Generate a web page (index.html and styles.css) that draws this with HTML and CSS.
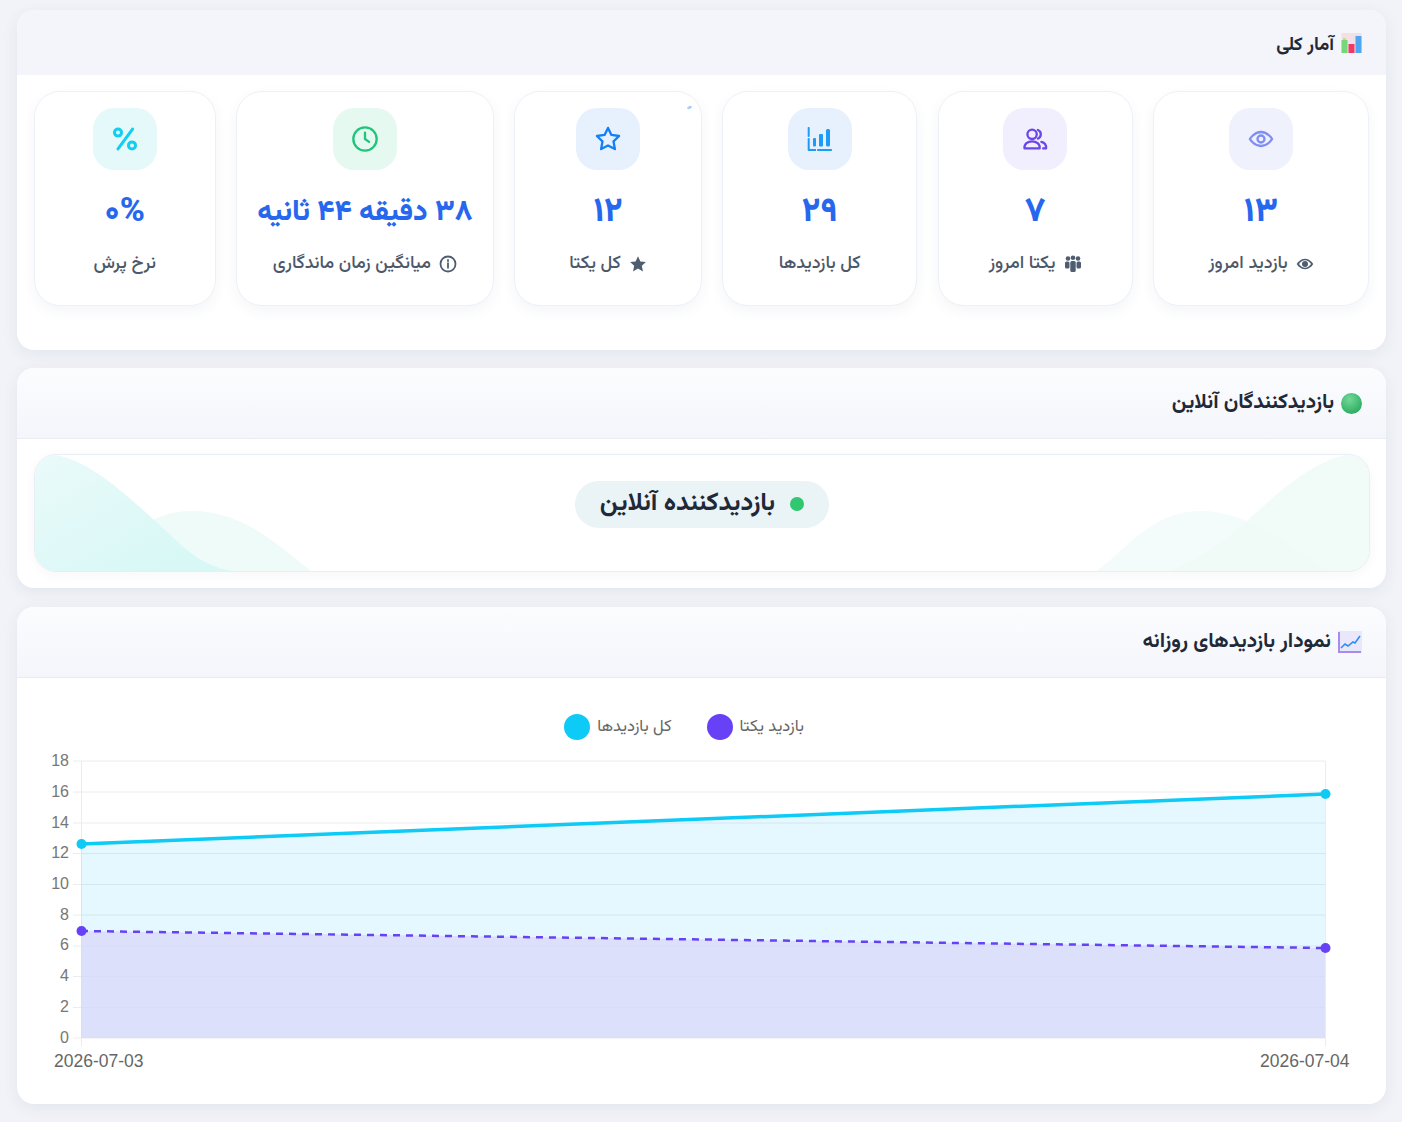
FILE: index.html
```html
<!DOCTYPE html>
<html lang="fa" dir="rtl">
<head>
<meta charset="utf-8">
<title>آمار کلی</title>
<link rel="stylesheet" href="styles.css">
</head>
<body>
<main class="page">
  <section class="card">
    <header class="card-head head-flat">
      <svg class="head-icon" viewBox="0 0 20 20"><rect width="20" height="20" fill="#f3dfe6"/><rect x="0" y="7" width="6" height="13" fill="#74d77b"/><rect x="7" y="11" width="6" height="9" fill="#ee3a67"/><rect x="14" y="3" width="6" height="17" fill="#4da6f2"/><rect x="1.5" y="5" width="3" height="2" fill="#d8d873"/></svg>
      <h2>آمار کلی</h2>
    </header>
    <div class="stats">
      <article class="stat">
        <div class="tile tile-eye"><svg class="tile-svg" viewBox="0 0 24 24"><path d="M2.5 12S6 6 12 6s9.500 6 9.500 6-3.500 6-9.500 6-9.500-6-9.500-6z"/><circle cx="12" cy="12" r="3"/></svg></div>
        <div class="num">۱۳</div>
        <div class="label"><svg class="mini" viewBox="0 0 24 16"><path d="M1 8s4-7 11-7 11 7 11 7-4 7-11 7S1 8 1 8zm3 0c2 3 5 5 8 5s6-2 8-5c-2-3-5-5-8-5S6 5 4 8z"/><circle cx="12" cy="8" r="4"/></svg><span>بازدید امروز</span></div>
      </article>
      <article class="stat">
        <div class="tile tile-users"><svg class="tile-svg" viewBox="0 0 24 24"><circle cx="9.500" cy="8" r="4"/><path d="M3 20c-.4-3.800 2.800-6 6.500-6s6.900 2.200 6.500 6z"/><path d="M14.500 4.300a4 4 0 0 1 0 7.400"/><path d="M17.500 14.500c2.600.7 4.200 2.800 4 5.500h-2.500"/></svg></div>
        <div class="num">۷</div>
        <div class="label"><svg class="mini" viewBox="0 0 18 18"><circle cx="4" cy="3.500" r="2.300"/><circle cx="9" cy="2.800" r="2.300"/><circle cx="14" cy="3.500" r="2.300"/><rect x="1" y="6.500" width="4.500" height="7" rx="1.500"/><rect x="6.300" y="6" width="5.400" height="11" rx="1.500"/><rect x="12.500" y="6.500" width="4.500" height="7" rx="1.500"/></svg><span>یکتا امروز</span></div>
      </article>
      <article class="stat">
        <div class="tile tile-bars"><svg class="bars-svg" viewBox="0 0 26 26"><rect x=".7" y="1" width="2" height="10" rx=".8"/><rect x=".7" y="12" width="2" height="13" rx=".8"/><rect x="2" y="23" width="7" height="2"/><rect x="10" y="23" width="15" height="2" rx=".8"/><rect x="6" y="12" width="3" height="8.500" rx="1"/><rect x="12" y="8" width="4" height="12.500" rx="1"/><rect x="19" y="3" width="4" height="17.500" rx="1.500"/></svg></div>
        <div class="num">۲۹</div>
        <div class="label"><span>کل بازدیدها</span></div>
      </article>
      <article class="stat stat-speck">
        <div class="tile tile-star"><svg class="tile-svg" viewBox="0 0 24 24"><path d="M12 2.500l2.950 6 6.550.950-4.750 4.650 1.150 6.550L12 17.550 6.100 20.650l1.150-6.550L2.500 9.450l6.550-.950z"/></svg></div>
        <div class="num">۱۲</div>
        <div class="label"><svg class="mini" viewBox="0 0 24 24"><path d="M12 1.500l3.200 7 7.300.900-5.400 5 1.500 7.500L12 18.100 5.400 21.900l1.500-7.500-5.400-5 7.300-.900z"/></svg><span>کل یکتا</span></div>
      </article>
      <article class="stat">
        <div class="tile tile-clock"><svg class="tile-svg" viewBox="0 0 24 24"><circle cx="12" cy="12" r="10"/><path d="M12 6.500V12l3.500 2.500"/></svg></div>
        <div class="num num-long">۳۸ دقیقه ۴۴ ثانیه</div>
        <div class="label"><svg class="mini info" viewBox="0 0 24 24"><circle cx="12" cy="12" r="10"/><path d="M12 11v6"/><path d="M12 6.500v1.500"/></svg><span>میانگین زمان ماندگاری</span></div>
      </article>
      <article class="stat">
        <div class="tile tile-pct"><svg class="tile-svg pct-svg" viewBox="0 0 24 24"><path d="M18.500 3.500L6 20.500"/><circle cx="6" cy="6.500" r="3"/><circle cx="18" cy="17.500" r="3"/></svg></div>
        <div class="num">۰%</div>
        <div class="label"><span>نرخ پرش</span></div>
      </article>
    </div>
  </section>

  <section class="card">
    <header class="card-head head-line">
      <span class="ball"></span>
      <h2>بازدیدکنندگان آنلاین</h2>
    </header>
    <div class="online-body">
      <div class="online-box">
        <svg class="waves waves-left" viewBox="0 0 340 118" preserveAspectRatio="none"><defs><linearGradient id="waveGrad" x1="0" y1="0" x2="1" y2="1"><stop offset="0" stop-color="#eafafa"/><stop offset=".8" stop-color="#d8f8f6"/></linearGradient></defs><path class="wave-soft" d="M60 118C90 85 115 57 156 57C205 57 235 85 276 118Z"/><path class="wave-main" d="M0 118V0H19C55 4 95 44 133 79C150 95 165 112 197 118Z"/></svg>
        <svg class="waves waves-right" viewBox="0 0 340 118" preserveAspectRatio="none"><path class="wave-soft2" d="M67 118C95 100 120 57 173 57C215 57 250 85 300 118Z"/><path class="wave-main2" d="M140 118C175 105 205 80 230 56C260 28 290 5 317 0H340V118Z"/></svg>
        <div class="pill"><span class="pill-dot"></span><strong>بازدیدکننده آنلاین</strong></div>
      </div>
    </div>
  </section>

  <section class="card">
    <header class="card-head head-line">
      <svg class="head-icon head-icon-wide" viewBox="0 0 24 22"><rect width="24" height="22" fill="#e9e8fb"/><path d="M1 1v20h22" fill="none" stroke="#a78bf0" stroke-width="2"/><path d="M3 17l4-4 3 2 5-4 2 1 5-7" fill="none" stroke="#2f8df2" stroke-width="1.600"/></svg>
      <h2>نمودار بازدیدهای روزانه</h2>
    </header>
    <div class="chart-body">
      <div class="legend">
        <div class="legend-item"><span>بازدید یکتا</span><i class="swatch swatch-purple"></i></div>
        <div class="legend-item"><span>کل بازدیدها</span><i class="swatch swatch-blue"></i></div>
      </div>
      <svg class="chart" viewBox="17 745 1369 345">
        <g class="grid">
          <path d="M73 761H1325M73 792H1325M73 823H1325M73 853.500H1325M73 884.500H1325M73 915H1325M73 946H1325M73 976.500H1325M73 1007.500H1325M73 1038H1325"/>
          <path d="M81.500 761V1046M1325.500 761V1046"/>
        </g>
        <path class="area-blue" d="M81 844L1325 794V1038H81Z"/>
        <path class="area-purple" d="M81 931L1325 948V1038H81Z"/>
        <g class="yticks">
          <text x="69" y="766">18</text><text x="69" y="797">16</text><text x="69" y="828">14</text><text x="69" y="858">12</text><text x="69" y="889">10</text><text x="69" y="920">8</text><text x="69" y="950">6</text><text x="69" y="981">4</text><text x="69" y="1012">2</text><text x="69" y="1043">0</text>
        </g>
        <text class="xtick" x="54" y="1067">2026-07-03</text>
        <text class="xtick" x="1260" y="1067">2026-07-04</text>
        <path class="line-blue" d="M81 844L1325 794"/>
        <path class="line-purple" d="M81 931L1325 948"/>
        <circle class="dot-blue" cx="81.500" cy="844" r="5"/><circle class="dot-blue" cx="1325.500" cy="794" r="5"/>
        <circle class="dot-purple" cx="81.500" cy="931" r="5"/><circle class="dot-purple" cx="1325.500" cy="948" r="5"/>
      </svg>
    </div>
  </section>
</main>
</body>
</html>
```
FILE: styles.css
```css
* { box-sizing: border-box; }
html, body { margin: 0; padding: 0; }
body {
  background: #f1f3f8;
  font-family: "Vazirmatn", "Noto Sans Arabic", "DejaVu Sans", sans-serif;
  color: #1f2937;
  overflow: hidden;
}
.page {
  display: flex;
  flex-direction: column;
  gap: 18.400px;
  padding: 10px 16px 18px 17px;
}
.card {
  background: #fff;
  border-radius: 17px;
  overflow: hidden;
  box-shadow: 0 4px 16px rgba(40, 55, 100, .07);
}
.card-head {
  display: flex;
  align-items: center;
  gap: 7px;
  padding: 0 24px;
}
.card-head h2 {
  margin: 0;
  font-size: 20.800px;
  font-weight: 700;
  color: #1f2937;
}
.head-flat { height: 65px; background: #f4f5fa; }
.head-flat h2 { font-size: 18.500px; padding-top: 5px; }
.head-line {
  height: 71px;
  background: linear-gradient(#fbfcfe, #f5f6fb);
  border-bottom: 1px solid #e9ebf4;
}
.head-icon { width: 21px; height: 20px; flex: none; }
.head-icon-wide { width: 24px; height: 22px; }
.ball {
  width: 21px;
  height: 21px;
  flex: none;
  border-radius: 50%;
  background: radial-gradient(circle at 40% 30%, #72d89a, #2fae62 75%);
}

.stats {
  display: grid;
  grid-template-columns: 216fr 195fr 195fr 187.500fr 258fr 181.500fr;
  gap: 20.400px;
  padding: 16px 17px 44px 17px;
}
.stat {
  position: relative;
  display: flex;
  flex-direction: column;
  align-items: center;
  height: 215px;
  padding-top: 16px;
  border: 1px solid #eef0f8;
  border-radius: 26px;
  background: #fff;
  box-shadow: 0 5px 14px rgba(40, 55, 100, .05);
}
.stat-speck::after {
  content: "";
  position: absolute;
  top: 14px;
  right: 9px;
  width: 5px;
  height: 3px;
  border-radius: 50%;
  background: #a9cdf5;
  transform: rotate(-25deg);
}
.tile {
  width: 64px;
  height: 62px;
  border-radius: 21px;
  display: flex;
  align-items: center;
  justify-content: center;
  flex: none;
}
.tile-svg {
  width: 28px;
  height: 28px;
  fill: none;
  stroke: currentColor;
  stroke-width: 2;
  stroke-linecap: round;
  stroke-linejoin: round;
}
.pct-svg { stroke-width: 2.600; }
.tile-eye { background: #eff1fd; color: #7f8df5; }
.tile-users { background: #f1eefd; color: #6a47ea; }
.tile-bars { background: #e6f1fd; color: #1e9bf7; }
.tile-star { background: #e6f1fd; color: #1480f5; }
.tile-clock { background: #e6f9f1; color: #1fc67a; }
.tile-pct { background: #e5f8fa; color: #13cfee; }
.bars-svg { width: 26px; height: 26px; fill: currentColor; }
.num {
  margin-top: 23px;
  height: 40px;
  line-height: 40px;
  font-size: 34px;
  font-weight: 800;
  color: #2667ee;
  white-space: nowrap;
}
.num-long { font-size: 29px; }
.label {
  margin-top: 18px;
  height: 26px;
  display: flex;
  align-items: center;
  gap: 8px;
  font-size: 18px;
  font-weight: 500;
  color: #4d5869;
  white-space: nowrap;
}
.mini { width: 18px; height: 18px; fill: #4f5d70; flex: none; }
.info { fill: none; stroke: #4f5d70; stroke-width: 2.400; stroke-linecap: round; }

.online-body { padding: 15px 16px 16px 17px; }
.online-box {
  position: relative;
  height: 118px;
  display: flex;
  align-items: center;
  justify-content: center;
  border: 1px solid #e9edf6;
  border-radius: 22px;
  background: #fff;
  overflow: hidden;
  box-shadow: 0 3px 12px rgba(40, 55, 100, .04);
}
.waves { position: absolute; top: 0; bottom: 0; width: 340px; height: 100%; }
.waves-left { left: 0; }
.waves-right { right: 0; }
.wave-main { fill: url(#waveGrad); }
.wave-soft { fill: #effbf9; }
.wave-main2 { fill: #eefaf7; fill-opacity: .85; }
.wave-soft2 { fill: #f3fcfa; }
.pill {
  position: relative;
  display: flex;
  align-items: center;
  gap: 15px;
  height: 47px;
  margin-bottom: 18px;
  padding: 0 25px;
  border-radius: 24px;
  background: #eaf4f7;
}
.pill strong { font-size: 25.500px; font-weight: 700; color: #1f2937; white-space: nowrap; }
.pill-dot { width: 14px; height: 14px; border-radius: 50%; background: #2fc76f; flex: none; }

.chart-body { padding: 36px 0 14px; }
.legend {
  display: flex;
  justify-content: center;
  gap: 35px;
  height: 26px;
  margin-bottom: 5px;
  padding-right: 35px;
}
.legend-item {
  display: flex;
  align-items: center;
  gap: 7px;
  font-size: 16.600px;
  color: #666;
  white-space: nowrap;
}
.swatch { width: 26px; height: 26px; border-radius: 50%; flex: none; }
.swatch-purple { background: #6741f5; }
.swatch-blue { background: #0dcaf6; }

.chart { display: block; width: 1369px; height: 345px; direction: ltr; }
.grid path { fill: none; stroke: #ececef; stroke-width: 1; }
.area-blue { fill: #00beff; fill-opacity: .1; }
.area-purple { fill: #d9daf9; fill-opacity: .8; }
.yticks text { font-family: "Liberation Sans", sans-serif; font-size: 16px; fill: #777; text-anchor: end; }
.xtick { font-family: "Liberation Sans", sans-serif; font-size: 17.500px; fill: #666; }
.line-blue { fill: none; stroke: #0dcaf6; stroke-width: 3.500; }
.line-purple { fill: none; stroke: #6741f5; stroke-width: 2.500; stroke-dasharray: 7 6; }
.dot-blue { fill: #0dcaf6; }
.dot-purple { fill: #6741f5; }
```
